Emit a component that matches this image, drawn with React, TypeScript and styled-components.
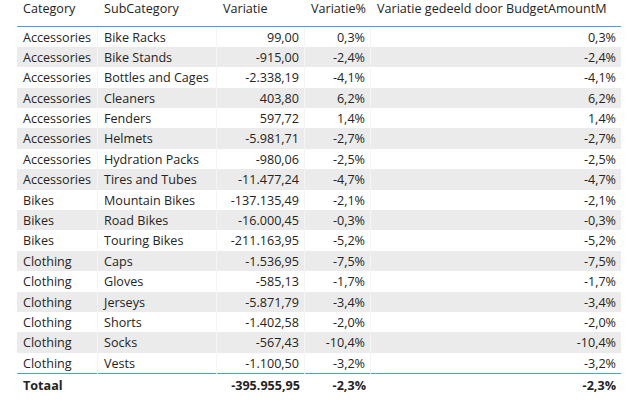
import React from "react";
import styled, { createGlobalStyle } from "styled-components";

const GlobalStyle = createGlobalStyle`
  body {
    margin: 0;
    background: #ffffff;
    font-family: "Open Sans", "Noto Sans", sans-serif;
    color: #252423;
  }
`;

const COLS = "81px 119px 88px 66px 250px";

const Table = styled.div`
  margin-left: 17px;
  width: 604px;
  font-size: 12.6px;
`;

const HeaderRow = styled.div`
  display: grid;
  grid-template-columns: ${COLS};
  height: 26.5px;
  border-bottom: 1.5px solid #41a4ea;
  box-sizing: border-box;
`;

const HeaderCell = styled.div`
  padding: 0 6px;
  line-height: 18px;
  white-space: nowrap;
  overflow: hidden;
`;

const Row = styled.div<{ $shade: boolean }>`
  display: grid;
  grid-template-columns: ${COLS};
  height: 20.4px;
  background: ${(p) => (p.$shade ? "#ebebeb" : "#ffffff")};
`;

const Cell = styled.div<{ $right?: boolean; $last?: boolean }>`
  padding: 0 5px 0 6px;
  line-height: 21px;
  white-space: nowrap;
  text-align: ${(p) => (p.$right ? "right" : "left")};
  border-right: ${(p) => (p.$last ? "none" : "1px solid #f4f4f4")};
`;

const TotalRow = styled.div`
  display: grid;
  grid-template-columns: ${COLS};
  height: 23px;
  border-top: 1.5px solid #41a4ea;
  font-weight: 700;
`;

const TotalCell = styled.div<{ $right?: boolean }>`
  padding: 0 5px 0 6px;
  line-height: 23px;
  white-space: nowrap;
  text-align: ${(p) => (p.$right ? "right" : "left")};
`;

type Item = [string, string, string, string];

const rows: Item[] = [
  ["Accessories", "Bike Racks", "99,00", "0,3%"],
  ["Accessories", "Bike Stands", "-915,00", "-2,4%"],
  ["Accessories", "Bottles and Cages", "-2.338,19", "-4,1%"],
  ["Accessories", "Cleaners", "403,80", "6,2%"],
  ["Accessories", "Fenders", "597,72", "1,4%"],
  ["Accessories", "Helmets", "-5.981,71", "-2,7%"],
  ["Accessories", "Hydration Packs", "-980,06", "-2,5%"],
  ["Accessories", "Tires and Tubes", "-11.477,24", "-4,7%"],
  ["Bikes", "Mountain Bikes", "-137.135,49", "-2,1%"],
  ["Bikes", "Road Bikes", "-16.000,45", "-0,3%"],
  ["Bikes", "Touring Bikes", "-211.163,95", "-5,2%"],
  ["Clothing", "Caps", "-1.536,95", "-7,5%"],
  ["Clothing", "Gloves", "-585,13", "-1,7%"],
  ["Clothing", "Jerseys", "-5.871,79", "-3,4%"],
  ["Clothing", "Shorts", "-1.402,58", "-2,0%"],
  ["Clothing", "Socks", "-567,43", "-10,4%"],
  ["Clothing", "Vests", "-1.100,50", "-3,2%"],
];

export default function App() {
  return (
    <>
      <GlobalStyle />
      <Table>
        <HeaderRow>
          <HeaderCell>Category</HeaderCell>
          <HeaderCell>SubCategory</HeaderCell>
          <HeaderCell>Variatie</HeaderCell>
          <HeaderCell>Variatie%</HeaderCell>
          <HeaderCell>Variatie gedeeld door BudgetAmountM</HeaderCell>
        </HeaderRow>
        {rows.map(([cat, sub, v, pct], i) => (
          <Row key={sub} $shade={i % 2 === 1}>
            <Cell>{cat}</Cell>
            <Cell>{sub}</Cell>
            <Cell $right>{v}</Cell>
            <Cell $right>{pct}</Cell>
            <Cell $right $last>{pct}</Cell>
          </Row>
        ))}
        <TotalRow>
          <TotalCell>Totaal</TotalCell>
          <TotalCell />
          <TotalCell $right>-395.955,95</TotalCell>
          <TotalCell $right>-2,3%</TotalCell>
          <TotalCell $right>-2,3%</TotalCell>
        </TotalRow>
      </Table>
    </>
  );
}
